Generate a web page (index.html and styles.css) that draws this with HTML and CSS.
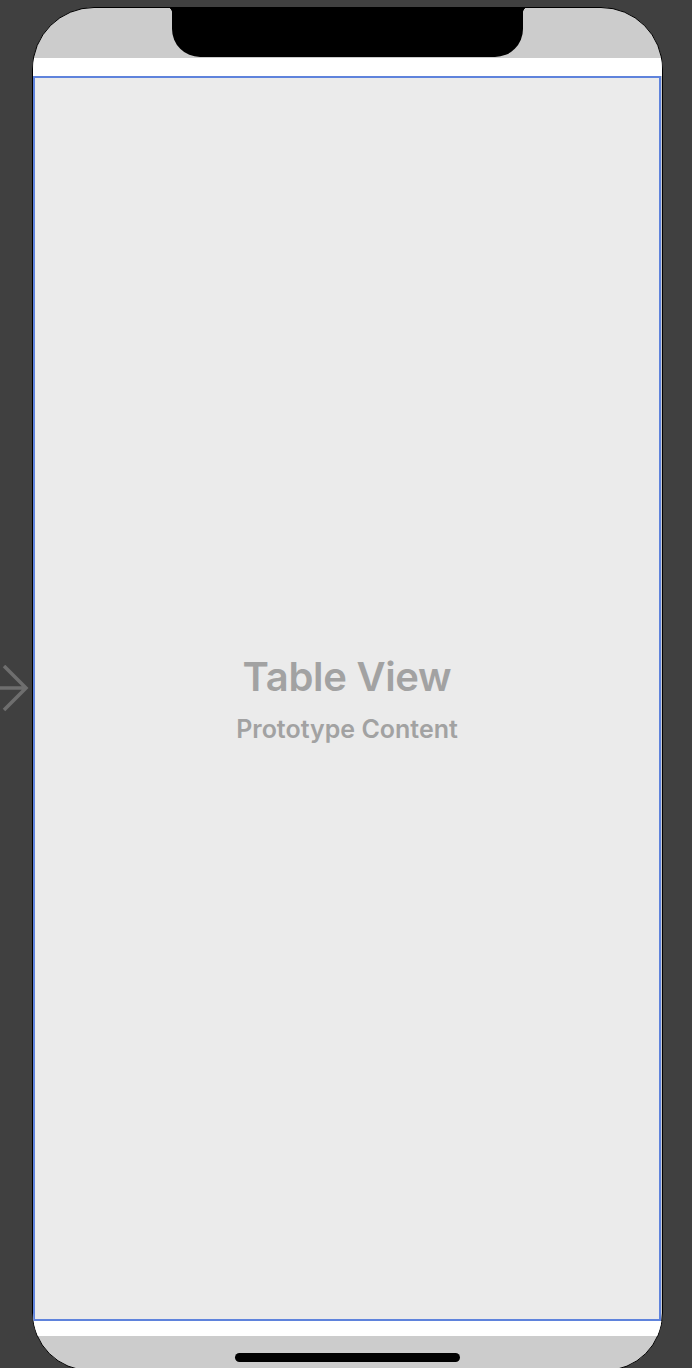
FILE: index.html
```html
<!DOCTYPE html>
<html lang="en">
<head>
  <meta charset="UTF-8" />
  <title>Table View Controller</title>
  <link rel="stylesheet" href="styles.css">
</head>
<body>
  <!-- Entry point arrow -->
  <svg class="entry-arrow" width="30" height="50" viewBox="0 0 30 50">
    <path d="M0 23 H26 M4 1 L26 23 L4 45" fill="none" stroke="#6e6e6e" stroke-width="3.5" stroke-linejoin="miter" />
  </svg>
  <!-- Device -->
  <div class="phone">
    <div class="status-bar"></div>
    <div class="notch"></div>
    <div class="nav-bar"></div>
    <div class="table-view">
      <div class="table-title">Table View</div>
      <div class="table-subtitle">Prototype Content</div>
    </div>
    <div class="toolbar"></div>
    <div class="home-area">
      <div class="home-indicator"></div>
    </div>
  </div>
</body>
</html>
```

FILE: styles.css
```css
body {
  margin: 0;
  padding: 0;
  background: #404040;
  height: 1368px;
  overflow: hidden;
  position: relative;
  font-family: Inter, "Liberation Sans", sans-serif;
}
.entry-arrow {
  position: absolute;
  left: 0;
  top: 665px;
}
/* Phone frame */
.phone {
  position: relative;
  margin: 7px 0 0 32px;
  width: 631px;
  height: 1364px;
  box-sizing: border-box;
  border: 1.5px solid #000;
  border-radius: 62px 62px 58px 58px;
  overflow: hidden;
  background: #cccccc;
  display: flex;
  flex-direction: column;
}
.status-bar {
  height: 50px;
  flex: none;
}
.notch {
  position: absolute;
  left: 139px;
  top: -1px;
  width: 351px;
  height: 50px;
  background: #000;
  border-radius: 0 0 28px 28px;
}
.notch::before,
.notch::after {
  content: "";
  position: absolute;
  top: 0;
  width: 5px;
  height: 5px;
}
.notch::before {
  left: -5px;
  background: radial-gradient(circle at 0 100%, #cccccc 4.5px, #000 5px);
}
.notch::after {
  right: -5px;
  background: radial-gradient(circle at 100% 100%, #cccccc 4.5px, #000 5px);
}
.nav-bar {
  height: 18px;
  flex: none;
  background: #fff;
}
/* Table view */
.table-view {
  height: 1245px;
  flex: none;
  box-sizing: border-box;
  margin-right: 1px;
  border: 2px solid #5f83dc;
  background: #ebebeb;
  display: flex;
  flex-direction: column;
  align-items: center;
  justify-content: center;
  color: #a2a2a2;
}
.table-title {
  font-size: 40px;
  font-weight: 600;
  letter-spacing: -0.3px;
  line-height: 46px;
}
.table-subtitle {
  font-size: 25px;
  font-weight: 600;
  line-height: 30px;
  margin-top: 14px;
}
.toolbar {
  height: 15px;
  flex: none;
  background: #fff;
}
.home-area {
  flex: 1;
  display: flex;
  justify-content: center;
  padding-top: 17px;
}
.home-indicator {
  width: 225px;
  height: 9px;
  border-radius: 5px;
  background: #000;
}
```
